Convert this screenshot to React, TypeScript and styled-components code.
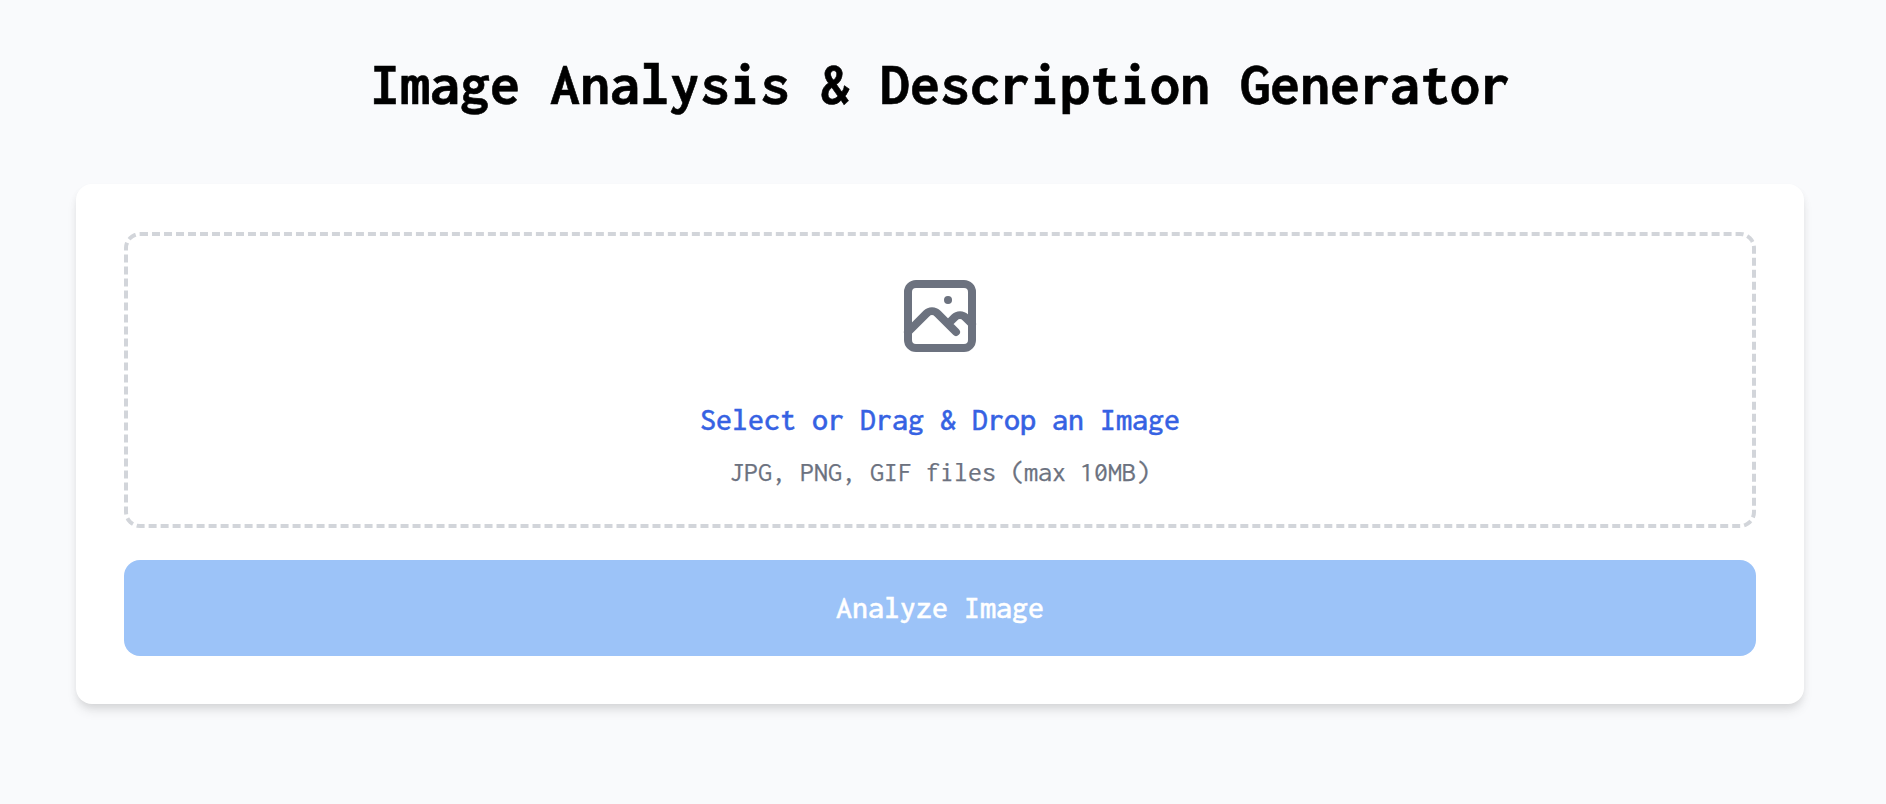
import React from "react";
import styled, { createGlobalStyle } from "styled-components";

const GlobalStyle = createGlobalStyle`
  *, *::before, *::after { box-sizing: border-box; }
  body {
    margin: 0;
    background: #f9fafc;
    font-family: Inconsolata, "Noto Sans Mono CJK SC", "Noto Sans Mono CJK JP", "Liberation Mono", monospace;
  }
`;

const Page = styled.main`
  width: 1880px;
  min-height: 804px;
  padding: 48px 76px;
`;

const Title = styled.h1`
  margin: 0 0 64px;
  font-size: 60px;
  line-height: 72px;
  font-weight: 700;
  text-align: center;
  white-space: nowrap;
  color: #000;
  -webkit-text-stroke: 0.6px currentColor;
`;

const Card = styled.section`
  display: flex;
  flex-direction: column;
  gap: 32px;
  padding: 48px;
  border-radius: 16px;
  background: #fff;
  box-shadow: 0 8px 12px -2px rgba(0, 0, 0, 0.1), 0 4px 8px -2px rgba(0, 0, 0, 0.08);
`;

const DropZone = styled.label`
  display: flex;
  flex-direction: column;
  align-items: center;
  height: 296px;
  padding: 32px;
  border: 4px dashed #d2d5da;
  border-radius: 16px;
  cursor: pointer;
`;

const PictureIcon = styled.svg`
  width: 96px;
  height: 96px;
  margin-bottom: 32px;
  color: #6c727f;
`;

const Prompt = styled.span`
  margin-bottom: 8px;
  font-size: 32px;
  line-height: 48px;
  font-weight: 500;
  color: #3662e3;
  -webkit-text-stroke: 0.4px currentColor;
`;

const Hint = styled.span`
  font-size: 28px;
  line-height: 40px;
  color: #6c727f;
  -webkit-text-stroke: 0.25px currentColor;
`;

const AnalyzeButton = styled.button`
  height: 96px;
  padding: 24px;
  border: 0;
  border-radius: 16px;
  background: #9cc3f8;
  color: #fff;
  font-family: inherit;
  font-size: 32px;
  line-height: 48px;
  font-weight: 500;
  -webkit-text-stroke: 0.45px currentColor;
`;

export default function App() {
  return (
    <>
      <GlobalStyle />
      <Page>
        <Title>Image Analysis &amp; Description Generator</Title>
        <Card>
          <DropZone>
            <PictureIcon viewBox="0 0 24 24" fill="none" stroke="currentColor" strokeWidth="2" strokeLinecap="round" strokeLinejoin="round">
              <path d="M4 16l4.586-4.586a2 2 0 012.828 0L16 16m-2-2l1.586-1.586a2 2 0 012.828 0L20 14m-6-6h.01M6 20h12a2 2 0 002-2V6a2 2 0 00-2-2H6a2 2 0 00-2 2v12a2 2 0 002 2z" />
            </PictureIcon>
            <Prompt>Select or Drag &amp; Drop an Image</Prompt>
            <Hint>JPG, PNG, GIF files (max 10MB)</Hint>
          </DropZone>
          <AnalyzeButton type="button">Analyze Image</AnalyzeButton>
        </Card>
      </Page>
    </>
  );
}
